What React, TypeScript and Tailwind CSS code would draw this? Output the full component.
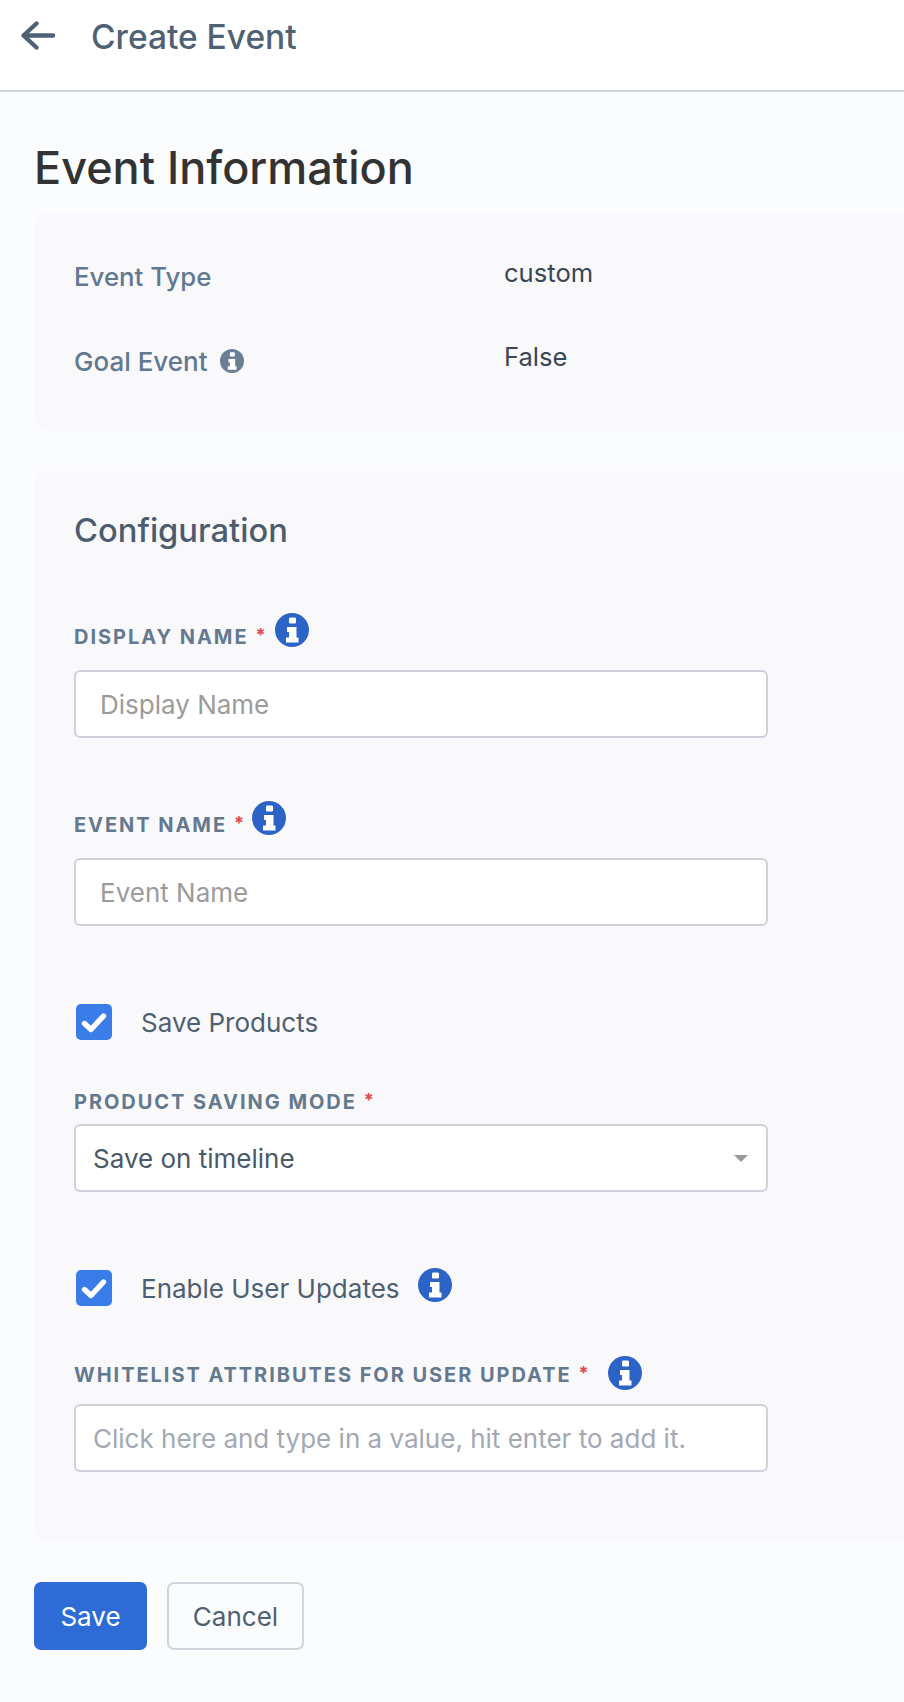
function Required() {
  return <span className="ml-[7px] relative -top-[2px] text-[18px] font-bold leading-none text-[#e5484d]">*</span>;
}

function InfoIcon({ className }: { className: string }) {
  return (
    <svg viewBox="0 0 34 34" className={className}>
      <circle cx="17" cy="17" r="17" fill="currentColor" />
      <rect x="14" y="4.5" width="7" height="6" rx="1.2" fill="#ffffff" />
      <path d="M12 14h9.5v10.5H23.5v5H11v-5h3v-5.5h-2z" fill="#ffffff" />
    </svg>
  );
}

function FieldLabel({ text, tip, iconClass = "" }: { text: string; tip?: boolean; iconClass?: string }) {
  return (
    <div className="flex h-[36px] items-center">
      <label className="text-[20px] font-bold leading-none tracking-[1.95px] text-[#64798f]">{text}</label>
      <Required />
      {tip && <InfoIcon className={`h-[34px] w-[34px] text-[#2b63c6] ${iconClass}`} />}
    </div>
  );
}

function TextInput({ placeholder, className }: { placeholder: string; className: string }) {
  return (
    <input
      placeholder={placeholder}
      className={`h-[68px] w-[694px] rounded-[6px] border-2 border-[#cdd2da] bg-white text-[26px] outline-none ${className}`}
    />
  );
}

function Checkbox() {
  return (
    <span className="flex h-[36px] w-[36px] items-center justify-center rounded-[5px] bg-[#3a7ce8]">
      <svg viewBox="0 0 36 36" className="h-[36px] w-[36px]" fill="none" stroke="#ffffff" strokeWidth="5.4" strokeLinecap="round" strokeLinejoin="round">
        <path d="M8.5 19.5 15 25.5 27.5 12" />
      </svg>
    </span>
  );
}

export default function App() {
  return (
    <div className="min-h-[1702px] bg-[#fbfcfe] font-['Inter',sans-serif] text-[#4c5c70]">
      <header className="flex h-[92px] items-start border-b-2 border-[#cfd5dd] bg-white pl-[21px] pt-[21px]">
        <svg viewBox="0 0 34 29" className="h-[29px] w-[34px]" fill="none" stroke="#4f6175" strokeWidth="4.4" strokeLinecap="round" strokeLinejoin="round">
          <path d="M32 14.5H3M15.5 2.5 2.5 14.5l13 12" />
        </svg>
        <h2 className="ml-[36px] -mt-[4px] text-[33.5px] font-medium leading-[40px] text-[#4f6175]">Create Event</h2>
      </header>

      <main className="pl-[34px]">
        <h1 className="mt-[48px] text-[45px] font-medium leading-[56px] text-[#333333]">Event Information</h1>

        <section className="mt-[17px] h-[218px] rounded-l-[16px] bg-[#f9f9fb] pl-[40px] pt-[46px]">
          <div className="flex h-[36px] items-center">
            <span className="w-[430px] text-[25.8px] font-medium text-[#627890]">Event Type</span>
            <span className="-mt-[8px] text-[25.6px] text-[#3a4654]">custom</span>
          </div>
          <div className="mt-[48px] flex h-[36px] items-center">
            <span className="flex w-[430px] items-center text-[26px] font-medium text-[#627890]">
              Goal Event
              <InfoIcon className="ml-[12px] h-[24px] w-[24px] text-[#6a7f97]" />
            </span>
            <span className="-mt-[8px] text-[25.6px] text-[#3a4654]">False</span>
          </div>
        </section>

        <section className="mt-[40px] h-[1071px] rounded-l-[16px] bg-[#f9f9fb] pl-[40px] pt-[38px]">
          <h3 className="text-[32.7px] font-medium leading-[42px] text-[#4c5c70]">Configuration</h3>

          <div className="mt-[68px]">
            <FieldLabel text="DISPLAY NAME" tip iconClass="ml-[9px] -mt-[14px]" />
            <TextInput placeholder="Display Name" className="mt-[15px] pl-[24px] placeholder:text-[#9b9b9b]" />
          </div>

          <div className="mt-[69px]">
            <FieldLabel text="EVENT NAME" tip iconClass="ml-[8px] -mt-[14px]" />
            <TextInput placeholder="Event Name" className="mt-[15px] pl-[24px] placeholder:text-[#9b9b9b]" />
          </div>

          <div className="mt-[78px] flex items-center">
            <span className="ml-[2px]"><Checkbox /></span>
            <span className="ml-[29px] h-[36px] text-[26px] leading-[38px] text-[#4f5f72]">Save Products</span>
          </div>

          <div className="mt-[44px]">
            <FieldLabel text="PRODUCT SAVING MODE" />
            <div className="mt-[4px] flex h-[68px] w-[694px] items-center justify-between rounded-[6px] border-2 border-[#cdd2da] bg-white pl-[17px] pr-[18px] text-[26px] text-[#4a5868]">
              Save on timeline
              <span className="h-0 w-0 border-x-[7px] border-t-[7px] border-x-transparent border-t-[#999999]" />
            </div>
          </div>

          <div className="mt-[78px] flex items-center">
            <span className="ml-[2px]"><Checkbox /></span>
            <span className="ml-[29px] h-[36px] text-[26px] leading-[38px] text-[#4f5f72]">Enable User Updates</span>
            <InfoIcon className="ml-[18px] -mt-[7px] h-[34px] w-[34px] text-[#2b63c6]" />
          </div>

          <div className="mt-[51px]">
            <FieldLabel text="WHITELIST ATTRIBUTES FOR USER UPDATE" tip iconClass="ml-[19px] -mt-[4px]" />
            <TextInput placeholder="Click here and type in a value, hit enter to add it." className="mt-[11px] pl-[17px] placeholder:text-[#a3a8b3]" />
          </div>
        </section>

        <div className="mt-[40px] flex gap-[20px]">
          <button className="h-[68px] w-[113px] rounded-[7px] bg-[#2f6bd6] text-[26px] text-white">Save</button>
          <button className="h-[68px] w-[137px] rounded-[7px] border-2 border-[#cfd5dd] text-[26px] text-[#4f5f72]">Cancel</button>
        </div>
      </main>
    </div>
  );
}
